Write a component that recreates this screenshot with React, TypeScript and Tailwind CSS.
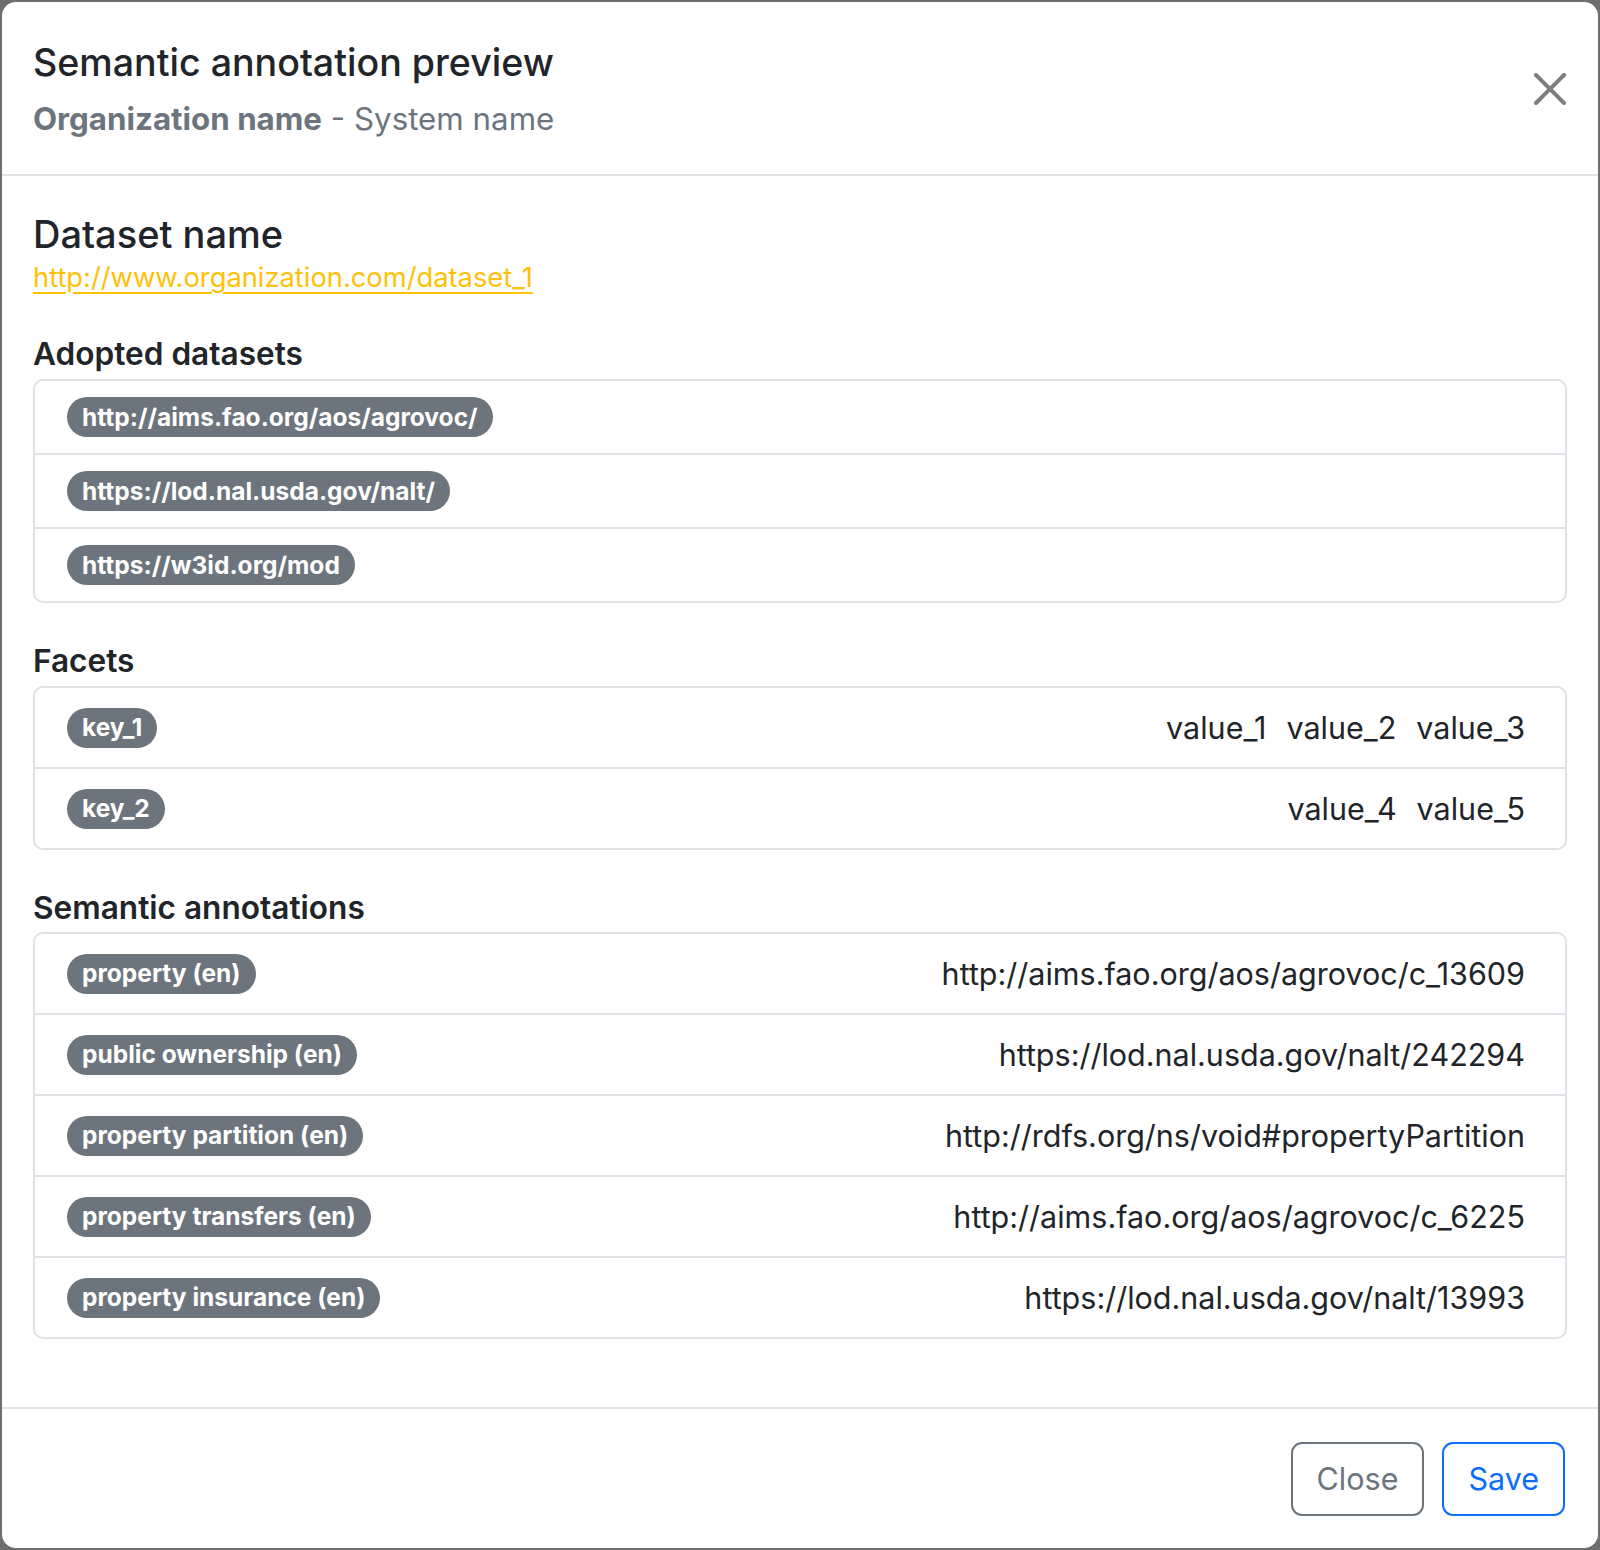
import React from "react";

const font = { fontFamily: 'Inter, "Noto Sans", sans-serif' };

function Badge({ children }: { children: React.ReactNode }) {
  return (
    <span className="inline-flex h-[40px] items-center rounded-full bg-[#6c757d] px-[15px] text-[24.5px] font-bold leading-none text-white whitespace-nowrap">
      {children}
    </span>
  );
}

const adopted = [
  "http://aims.fao.org/aos/agrovoc/",
  "https://lod.nal.usda.gov/nalt/",
  "https://w3id.org/mod",
];

const facets: { key: string; values: string[] }[] = [
  { key: "key_1", values: ["value_1", "value_2", "value_3"] },
  { key: "key_2", values: ["value_4", "value_5"] },
];

const annotations = [
  { label: "property (en)", uri: "http://aims.fao.org/aos/agrovoc/c_13609" },
  { label: "public ownership (en)", uri: "https://lod.nal.usda.gov/nalt/242294" },
  { label: "property partition (en)", uri: "http://rdfs.org/ns/void#propertyPartition" },
  { label: "property transfers (en)", uri: "http://aims.fao.org/aos/agrovoc/c_6225" },
  { label: "property insurance (en)", uri: "https://lod.nal.usda.gov/nalt/13993" },
];

export default function App() {
  return (
    <div className="h-[1550px] w-[1600px] bg-[#6e6e6e] p-[2px]" style={font}>
      <div className="flex h-[1546px] w-full flex-col overflow-hidden rounded-[14px] bg-white text-[#212529]">
        {/* Header */}
        <div className="flex items-center justify-between border-b-2 border-[#dee2e6] px-[31px] pb-[33px] pt-[34px]">
          <div>
            <h5 className="text-[37.6px] font-medium leading-[54px]">
              Semantic annotation preview
            </h5>
            <div className="mt-[8px] text-[31.3px] leading-[43px] text-[#6c757d]">
              <span className="font-bold">Organization name</span>
              <span> - System name</span>
            </div>
          </div>
          <button className="-mr-[3px] flex h-[40px] w-[40px] items-center justify-center">
            <svg viewBox="0 0 16 16" className="h-[32px] w-[32px]" fill="#000" opacity="0.5">
              <path d="M.293.293a1 1 0 0 1 1.414 0L8 6.586 14.293.293a1 1 0 1 1 1.414 1.414L9.414 8l6.293 6.293a1 1 0 0 1-1.414 1.414L8 9.414l-6.293 6.293a1 1 0 0 1-1.414-1.414L6.586 8 .293 1.707a1 1 0 0 1 0-1.414z" />
            </svg>
          </button>
        </div>

        {/* Body */}
        <div className="flex-1 px-[31px] pt-[37px]">
          <h4 className="text-[38px] font-medium leading-[43px]">Dataset name</h4>
          <a href="#" className="block w-fit text-[27.3px] leading-[43px] text-[#ffc107] underline underline-offset-[5px] decoration-[2px]">
            http://www.organization.com/dataset_1
          </a>

          <h6 className="mt-[37px] text-[31.6px] font-semibold leading-[35px]">Adopted datasets</h6>
          <div className="mt-[8px] rounded-[10px] border-2 border-[#dee2e6]">
            {adopted.map((a, i) => (
              <div
                key={a}
                className={`flex items-center px-[32px] py-[16px] ${i > 0 ? "border-t-2 border-[#dee2e6]" : ""}`}
              >
                <Badge>{a}</Badge>
              </div>
            ))}
          </div>

          <h6 className="mt-[40px] text-[31.6px] font-semibold leading-[35px]">Facets</h6>
          <div className="mt-[8px] rounded-[10px] border-2 border-[#dee2e6]">
            {facets.map((f, i) => (
              <div
                key={f.key}
                className={`flex items-center justify-between py-[18px] pl-[32px] pr-[40px] ${i > 0 ? "border-t-2 border-[#dee2e6]" : ""}`}
              >
                <Badge>{f.key}</Badge>
                <div className="flex gap-[20px] text-[30.5px] leading-[43px]">
                  {f.values.map((v) => (
                    <span key={v}>{v}</span>
                  ))}
                </div>
              </div>
            ))}
          </div>

          <h6 className="mt-[40px] text-[31.6px] font-semibold leading-[35px]">Semantic annotations</h6>
          <div className="mt-[7px] rounded-[10px] border-2 border-[#dee2e6]">
            {annotations.map((a, i) => (
              <div
                key={a.label}
                className={`flex items-center justify-between py-[18px] pl-[32px] pr-[40px] ${i > 0 ? "border-t-2 border-[#dee2e6]" : ""}`}
              >
                <Badge>{a.label}</Badge>
                <span className="text-[30.5px] leading-[43px]">{a.uri}</span>
              </div>
            ))}
          </div>
        </div>

        {/* Footer */}
        <div className="flex justify-end gap-[18px] border-t-2 border-[#dee2e6] px-[33px] pb-[32px] pt-[33px]">
          <button className="h-[74px] rounded-[11px] border-2 border-[#6c757d] px-[24px] text-[30.5px] text-[#6c757d]">
            Close
          </button>
          <button className="h-[74px] rounded-[11px] border-2 border-[#0d6efd] px-[24px] text-[30.5px] text-[#0d6efd]">
            Save
          </button>
        </div>
      </div>
    </div>
  );
}
